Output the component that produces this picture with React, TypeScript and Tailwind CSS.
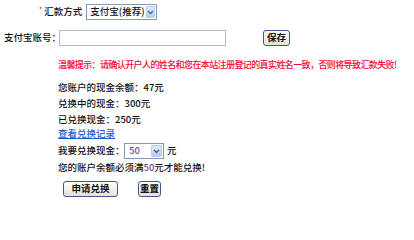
const font = { fontFamily: '"Noto Sans CJK SC", "Liberation Sans", sans-serif' };

// XP 风格下拉框
const FakeSelect = ({ value, width, valueClass }: { value: string; width: string; valueClass?: string }) => (
  <div className={`flex h-[16px] items-stretch border border-[#7f9db9] bg-white ${width}`}>
    <span className={`flex flex-1 items-center whitespace-nowrap pl-[3px] text-[9.5px] font-medium leading-none ${valueClass ?? "text-[#111]"}`}>{value}</span>
    <span className="m-[1px] flex w-[11px] items-center justify-center rounded-[1px] border border-[#b9cdf6] bg-gradient-to-b from-[#e2ebfd] to-[#b7cbf5]">
      <svg width="7" height="5" viewBox="0 0 7 5">
        <path d="M1 1 L3.5 3.5 L6 1" fill="none" stroke="#4d6185" strokeWidth="1.4" />
      </svg>
    </span>
  </div>
);

const XpButton = ({ label, width }: { label: string; width: string }) => (
  <button
    className={`flex h-[16px] items-center justify-center rounded-[3px] border border-[#3d5a87] bg-gradient-to-b from-white to-[#e4e2d6] text-[9.5px] font-bold leading-none text-[#111] ${width}`}
  >
    {label}
  </button>
);

const line = "flex items-center whitespace-nowrap text-[9.5px] font-medium leading-none text-[#111]";

export default function App() {
  return (
    <div className="h-[203px] w-[414px] overflow-hidden bg-white pt-[4px] text-[#111]" style={font}>
      {/* 汇款方式 */}
      <div className="flex h-[16px] items-center pl-[39px]">
        <span className="mr-[2px] self-start pt-[2px] text-[7px] leading-none text-[#ff0033]">*</span>
        <span className={line}>汇款方式</span>
        <div className="ml-[4px]">
          <FakeSelect value="支付宝(推荐)" width="w-[71px]" />
        </div>
      </div>

      {/* 支付宝账号 */}
      <div className="mt-[10px] flex h-[16px] items-center pl-[4px]">
        <span className={`${line} w-[55px]`}>支付宝账号：</span>
        <div className="h-[16px] w-[167px] border border-[#a9bfd6] bg-white" />
        <div className="ml-[37px]">
          <XpButton label="保存" width="w-[27px]" />
        </div>
      </div>

      <div className="pl-[58px]">
        <div className="mt-[10px] flex h-[16px] items-center whitespace-nowrap text-[9px] font-medium leading-none tracking-[-0.6px] text-[#ff0033]">
          温馨提示：请确认开户人的姓名和您在本站注册登记的真实姓名一致，否则将导致汇款失败!
        </div>

        <div className={`${line} mt-[8px] h-[16px]`}>您账户的现金余额：47元</div>
        <div className={`${line} h-[16px]`}>兑换中的现金：300元</div>
        <div className={`${line} h-[15px]`}>已兑换现金：250元</div>
        <div className="flex h-[14px] items-center">
          <a href="#" className="text-[9.5px] font-medium leading-none text-[#1a5bd6] underline">
            查看兑换记录
          </a>
        </div>

        <div className="mt-[2px] flex h-[16px] items-center">
          <span className={`${line} w-[66px]`}>我要兑换现金：</span>
          <FakeSelect value="50" width="w-[40px]" valueClass="text-[#6a4c9c] pl-[4px]" />
          <span className={`${line} ml-[3px]`}>元</span>
        </div>
        <div className={`${line} mt-[1px] h-[16px]`}>
          您的账户余额必须满<span className="text-[#6a4c9c]">50</span>元才能兑换!
        </div>

        <div className="mt-[5px] flex items-center pl-[5px]">
          <XpButton label="申请兑换" width="w-[55px]" />
          <div className="ml-[20px]">
            <XpButton label="重置" width="w-[23px]" />
          </div>
        </div>
      </div>
    </div>
  );
}
